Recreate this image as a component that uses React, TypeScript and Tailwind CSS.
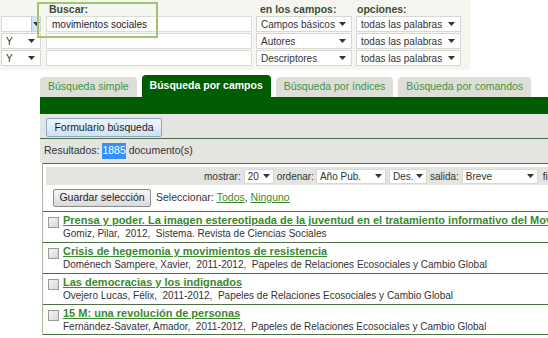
import React from 'react';

const Arrow = () => (
  <svg width="7" height="4" viewBox="0 0 7 4" className="shrink-0">
    <path d="M0 0h7L3.5 4z" fill="#333" />
  </svg>
);

function Select({
  label,
  className = '',
  hot = false,
  tight = false,
}: {
  label: string;
  className?: string;
  hot?: boolean;
  tight?: boolean;
}) {
  return (
    <div
      className={`flex shrink-0 items-center justify-between bg-white border border-[#d8d8d3] text-[10px] text-[#333] whitespace-nowrap ${className}`}
    >
      <span className={`min-w-0 overflow-hidden ${tight ? 'pl-[3px]' : 'pl-[4px]'}`}>{label}</span>
      {hot ? (
        <span className="flex h-full w-[9px] shrink-0 items-center justify-center bg-[#d3e5f6] border-l border-[#a7c5e3]">
          <Arrow />
        </span>
      ) : (
        <span className={`flex shrink-0 items-center ${tight ? 'pl-[2px] pr-[3px]' : 'pr-[5px]'}`}>
          <Arrow />
        </span>
      )}
    </div>
  );
}

const rows = [
  { op: '', text: 'movimientos sociales', field: 'Campos básicos' },
  { op: 'Y', text: '', field: 'Autores' },
  { op: 'Y', text: '', field: 'Descriptores' },
];

const records = [
  {
    title: 'Prensa y poder. La imagen estereotipada de la juventud en el tratamiento informativo del Movimiento 15-M',
    meta: 'Gomiz, Pilar,\u00a0 2012,\u00a0 Sistema. Revista de Ciencias Sociales',
  },
  {
    title: 'Crisis de hegemonia y movimientos de resistencia',
    meta: 'Doménech Sampere, Xavier,\u00a0 2011-2012,\u00a0 Papeles de Relaciones Ecosociales y Cambio Global',
  },
  {
    title: 'Las democracias y los indignados',
    meta: 'Ovejero Lucas, Félix,\u00a0 2011-2012,\u00a0 Papeles de Relaciones Ecosociales y Cambio Global',
  },
  {
    title: '15 M: una revolución de personas',
    meta: 'Fernández-Savater, Amador,\u00a0 2011-2012,\u00a0 Papeles de Relaciones Ecosociales y Cambio Global',
  },
];

const tabs = [
  { label: 'Búsqueda simple', active: false },
  { label: 'Búsqueda por campos', active: true },
  { label: 'Búsqueda por índices', active: false },
  { label: 'Búsqueda por comandos', active: false },
];

export default function App() {
  return (
    <div className="w-[548px] h-[338px] overflow-hidden bg-white font-['Liberation_Sans',Arial,sans-serif] text-[#333]">
      {/* search form */}
      <div className="relative w-[470px] h-[70px] bg-[#f6f6f1]">
        <div className="flex h-[16px] items-end pb-[2px] text-[10.5px] font-bold text-[#3e4b38] leading-none">
          <div className="w-[49px] shrink-0" />
          <div className="w-[211px] shrink-0">Buscar:</div>
          <div className="w-[97px] shrink-0">en los campos:</div>
          <div>opciones:</div>
        </div>
        <div className="flex flex-col gap-[1px]">
          {rows.map((r, i) => (
            <div key={i} className="flex h-[16px]">
              <Select label={r.op} hot={i === 0} className="ml-[1px] w-[40px]" />
              <div className="ml-[5px] flex w-[206px] items-center bg-white border border-[#dcdcd7] pl-[5px] text-[10px] text-[#222]">
                {r.text}
              </div>
              <Select label={r.field} className="ml-[4px] w-[96px]" />
              <Select label="todas las palabras" className="ml-[4px] w-[105px]" />
            </div>
          ))}
        </div>
        <div className="absolute left-[37px] top-[2px] w-[121px] h-[36px] border-2 border-[#a3c46f]" />
      </div>

      {/* tabs */}
      <div className="mt-[5px] flex items-end gap-[5px] pl-[40px]">
        {tabs.map((t) =>
          t.active ? (
            <div
              key={t.label}
              className="flex h-[22px] shrink-0 items-center rounded-t-[4px] bg-[#005c00] px-[8px] text-[10.5px] font-bold text-white"
            >
              {t.label}
            </div>
          ) : (
            <div
              key={t.label}
              className="flex h-[20px] shrink-0 items-center rounded-t-[4px] bg-[#deded9] px-[8px] text-[10.5px] text-[#3d963d]"
            >
              {t.label}
            </div>
          )
        )}
      </div>
      <div className="ml-[40px] h-[17px] bg-[#005c00]" />

      {/* form bar + results count */}
      <div className="ml-[40px] bg-[#e4e4e1]">
        <div className="pt-[4px] pl-[6px]">
          <div className="flex h-[19px] w-[116px] items-center justify-center rounded-[2px] border border-[#8aa6c2] bg-gradient-to-b from-[#eef5fc] to-[#cfe1f2] text-[10.5px] text-[#222]">
            Formulario búsqueda
          </div>
        </div>
        <div className="mt-[1px] h-px bg-[#4d6e47]" />
        <div className="flex h-[24px] items-center pl-[4px] text-[10.5px] text-[#333]">
          Resultados:&nbsp;<span className="bg-[#3390ff] text-white">1885</span>&nbsp;documento(s)
        </div>
      </div>

      {/* results box */}
      <div className="ml-[42px] border-l border-l-[#a7b7a1] border-t border-t-[#4d6e47]">
        <div className="ml-[3px] mt-[3px] flex h-[18px] items-center bg-[#e4e4e1] pl-[158px] text-[10px] text-[#333] whitespace-nowrap">
          <span className="shrink-0">mostrar:</span>
          <Select label="20" tight className="ml-[3px] h-[15px] w-[30px]" />
          <span className="ml-[3px] shrink-0">ordenar:</span>
          <Select label="Año Pub." tight className="ml-[2px] h-[15px] w-[70px]" />
          <Select label="Des." tight className="ml-[3px] h-[15px] w-[38px]" />
          <span className="ml-[3px] shrink-0">salida:</span>
          <Select label="Breve" tight className="ml-[3px] h-[15px] w-[76px]" />
          <span className="ml-[5px] shrink-0">fi</span>
        </div>
        <div className="flex h-[26px] items-center pl-[10px] text-[10.5px] whitespace-nowrap">
          <div className="flex h-[18px] w-[98px] items-center justify-center rounded-[2px] border border-[#8c8c8c] bg-gradient-to-b from-[#f7f7f7] to-[#dadada] text-[#222]">
            Guardar selección
          </div>
          <span className="ml-[5px]">Seleccionar:&nbsp;</span>
          <span className="text-[#3a8a2c] underline">Todos</span>
          <span>,&nbsp;</span>
          <span className="text-[#3a8a2c] underline">Ninguno</span>
        </div>
        {records.map((r, i) => (
          <div
            key={i}
            className={`flex h-[31px] border-t border-[#4d6e47] ${i === records.length - 1 ? 'border-b' : ''}`}
          >
            <div className="ml-[5px] mt-[5px] h-[11px] w-[11px] shrink-0 border border-[#9a9a9a] bg-gradient-to-br from-[#f4f4f4] to-[#d8d8d8]" />
            <div className="ml-[4px] min-w-0 pt-[1px] whitespace-nowrap overflow-hidden">
              <div className="text-[11px] leading-[14px] font-bold text-[#3a8a2c] underline">{r.title}</div>
              <div className="text-[10px] leading-[13px] text-[#333]">{r.meta}</div>
            </div>
          </div>
        ))}
      </div>
    </div>
  );
}
